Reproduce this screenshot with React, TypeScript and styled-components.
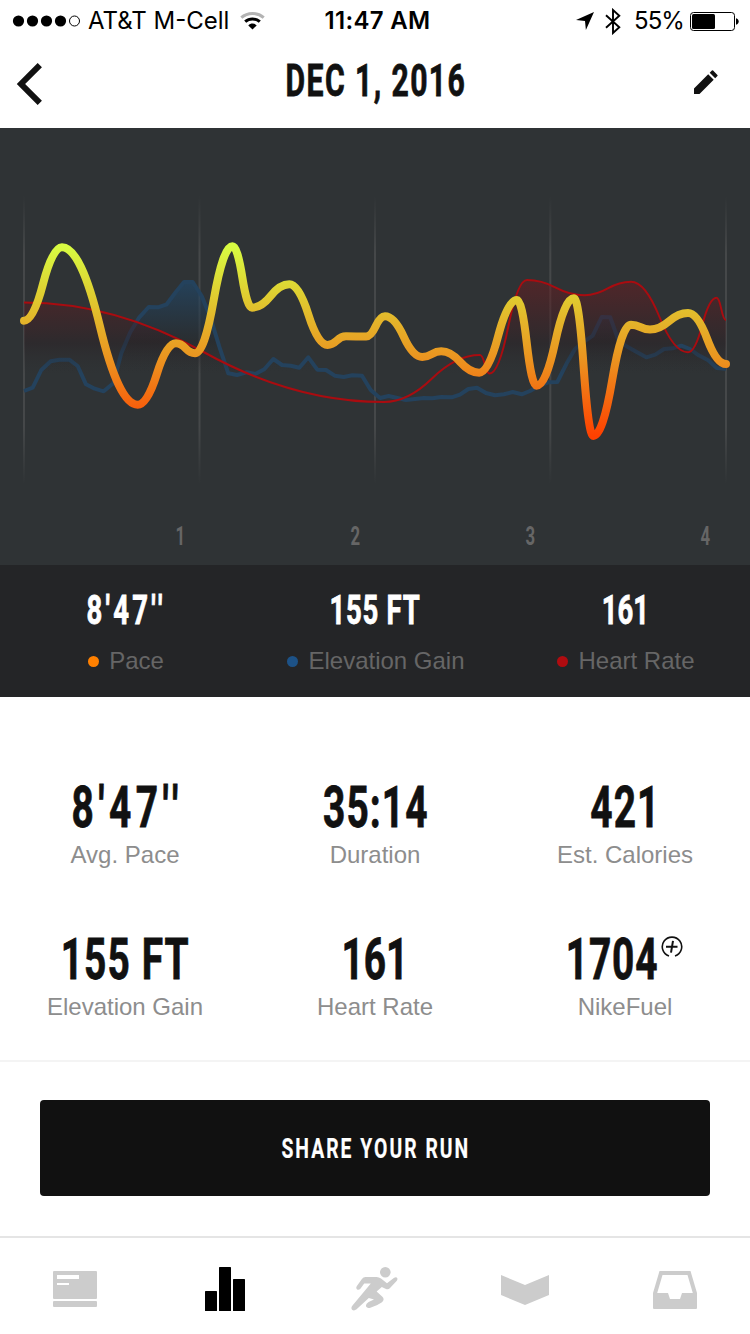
import React from "react";
import styled, { createGlobalStyle } from "styled-components";

const GlobalStyle = createGlobalStyle`
  * { box-sizing: border-box; }
  body { margin: 0; background: #fff; }
`;

const Screen = styled.div`
  width: 750px;
  height: 1334px;
  display: flex;
  flex-direction: column;
  overflow: hidden;
  background: #fff;
  color: #111;
  font-family: "Liberation Sans", Arial, sans-serif;
`;

/* Narrow display lettering: a fixed-width slot with its text squeezed into it. */
const Slot = styled.span<{ $width: number; $size: number }>`
  display: inline-flex;
  justify-content: center;
  width: ${(p) => p.$width}px;
  font-size: ${(p) => p.$size}px;
  line-height: 1;
`;
const Squeezed = styled.span<{ $scale: number; $tracking: number; $weight: number; $stroke: number }>`
  flex: none;
  white-space: pre;
  font-family: Roboto, sans-serif;
  font-weight: ${(p) => p.$weight};
  letter-spacing: ${(p) => p.$tracking}em;
  margin-right: ${(p) => -p.$tracking / 2}em;
  -webkit-text-stroke: ${(p) => p.$stroke}px currentColor;
  transform: scaleX(${(p) => p.$scale});
`;

type CondensedProps = {
  text: string;
  width: number;
  size: number;
  scale?: number;
  tracking?: number;
  weight?: number;
  stroke?: number;
};
function Condensed({ text, width, size, scale = 0.67, tracking = 0.028, weight = 700, stroke = 0.8 }: CondensedProps) {
  return (
    <Slot $width={width} $size={size}>
      <Squeezed $scale={scale} $tracking={tracking} $weight={weight} $stroke={stroke}>
        {text}
      </Squeezed>
    </Slot>
  );
}

const StatusBar = styled.div`
  height: 40px;
  flex: none;
  display: grid;
  grid-template-columns: 1fr 120px 1fr;
  align-items: center;
  padding: 1px 11px 0 12px;
  color: #000;
  font: 400 24px/40px Inter, sans-serif;
`;
const Carrier = styled.div`
  display: flex;
  align-items: center;
  white-space: nowrap;
`;
const CarrierName = styled.span`
  margin: 0 11px 0 7px;
`;
const Clock = styled.div`
  padding-left: 4px;
  text-align: center;
  font-weight: 600;
  letter-spacing: 0.3px;
  white-space: nowrap;
`;
const Indicators = styled.div`
  display: flex;
  align-items: center;
  justify-content: flex-end;
`;
const BluetoothSlot = styled.span`
  display: flex;
  margin: 0 13px 0 11px;
`;
const BatteryLevel = styled.span`
  margin-right: 6px;
  letter-spacing: -0.9px;
`;

const Header = styled.header`
  height: 88px;
  flex: none;
  display: grid;
  grid-template-columns: 60px 1fr 60px;
  align-items: center;
  padding: 0 16px;
`;
const Title = styled.h1`
  margin: -8px 0 0;
  display: flex;
  justify-content: center;
`;
const IconButton = styled.button<{ $end?: boolean }>`
  display: flex;
  justify-content: ${(p) => (p.$end ? "flex-end" : "flex-start")};
  padding: ${(p) => (p.$end ? "0 16px 4px 0" : "0")};
  border: 0;
  background: none;
  color: #111;
`;

const ChartPanel = styled.section`
  height: 437px;
  flex: none;
  display: flex;
  flex-direction: column;
  background: #2f3335;
`;
const MileAxis = styled.div`
  display: flex;
  padding: 7px 0 0 93px;
  color: #666;
`;
const Mile = styled.div`
  width: 175px;
  flex: none;
  display: flex;
  justify-content: center;
`;

const Summary = styled.section`
  height: 132px;
  flex: none;
  display: grid;
  grid-template-columns: repeat(3, 1fr);
  padding-top: 25px;
  background: #242527;
  color: #fff;
`;
const SummaryItem = styled.div`
  display: flex;
  flex-direction: column;
  align-items: center;
  gap: 16px;
`;
const Legend = styled.div<{ $color: string }>`
  display: flex;
  align-items: center;
  gap: 10px;
  margin-left: 2px;
  font-size: 24px;
  line-height: 27px;
  color: #666;
  &::before {
    content: "";
    width: 11px;
    height: 11px;
    margin-top: 2px;
    border-radius: 50%;
    background: ${(p) => p.$color};
  }
`;

const Stats = styled.section`
  height: 363px;
  flex: none;
  display: grid;
  grid-template-columns: repeat(3, 1fr);
  grid-auto-rows: 152px;
  padding-top: 81px;
`;
const Stat = styled.div`
  display: flex;
  flex-direction: column;
  align-items: center;
`;
const StatValue = styled.div`
  display: flex;
  gap: 4px;
  height: 63px;
`;
const FuelMark = styled.span`
  margin-top: 6px;
`;
const StatLabel = styled.div`
  font-size: 24px;
  line-height: 27px;
  color: #8d8d8d;
`;

const ShareArea = styled.div`
  height: 176px;
  flex: none;
  padding: 38px 40px 0;
  border-top: 2px solid #f4f4f4;
`;
const ShareButton = styled.button`
  display: flex;
  align-items: center;
  justify-content: center;
  width: 100%;
  height: 96px;
  padding: 2px 0 0;
  border: 0;
  border-radius: 4px;
  background: #111;
  color: #fff;
`;

const TabBar = styled.nav`
  flex: 1;
  display: grid;
  grid-template-columns: repeat(5, 1fr);
  align-items: center;
  padding-top: 6px;
  border-top: 2px solid #e5e5e5;
`;
const Tab = styled.a<{ $active?: boolean }>`
  display: flex;
  justify-content: center;
  color: ${(p) => (p.$active ? "#000" : "#ccc")};
`;

type Point = [number, number];

/* Each span is two quadratic halves that are level at the samples and meet midway. */
function smooth(pts: Point[]): string {
  let d = `M${pts[0][0]} ${pts[0][1]}`;
  for (let i = 1; i < pts.length; i++) {
    const [x0, y0] = pts[i - 1];
    const [x1, y1] = pts[i];
    const mx = (x0 + x1) / 2;
    const my = (y0 + y1) / 2;
    d += `Q${(x0 + mx) / 2} ${y0} ${mx} ${my}Q${(mx + x1) / 2} ${y1} ${x1} ${y1}`;
  }
  return d;
}

const pace: Point[] = [
  [24, 320.7], [62, 247.3], [137.7, 404.7], [176, 343.3], [195, 353.3], [232.5, 246.3], [252, 307.7],
  [289.3, 284.3], [327.5, 345], [346, 336.3], [366.2, 336.5], [385, 316.3], [422.3, 357], [441.2, 351.3],
  [479.2, 372.7], [517, 300], [536.5, 385.7], [574, 298.3], [593.3, 436], [631, 324.7], [650, 329.5],
  [688, 313], [726, 364],
];

const elevation: Point[] = [
  [24, 391], [32.7, 387.7], [41.3, 370], [50.7, 361.3], [59.3, 359.7], [69.3, 359.7], [77.7, 366], [86, 384.3],
  [94.7, 388.7], [103.7, 391.3], [113.3, 383.3], [121.3, 353.3], [130, 332.7], [139.3, 317.3], [148.7, 307],
  [158, 307.3], [166.7, 304.3], [175.3, 292.7], [184, 282], [192.7, 282], [201.7, 296], [210.7, 318.3],
  [219.3, 346.7], [228.3, 373.3], [237, 375], [246.7, 372.3], [255.3, 374], [264.3, 369.3], [273.3, 359],
  [282, 365], [290.7, 365.7], [299.3, 367.7], [308.3, 357.3], [317.3, 369.7], [326, 370], [334.7, 375.7],
  [343.7, 377], [352.3, 375.3], [362, 375.7], [370.7, 390], [380, 398], [388.7, 396], [397.3, 398], [406, 400],
  [415, 399], [424, 398], [432.3, 398.3], [441.3, 397], [451.7, 397.3], [460, 394.7], [468.3, 389], [477, 387.7],
  [486, 393], [495, 395.3], [504, 394.3], [512.7, 392], [521.7, 394.3], [530, 391], [538.3, 386], [548.3, 382.3],
  [557.3, 382], [566.7, 363.3], [575, 349], [584, 341.7], [592.7, 335.7], [601.7, 317], [610.3, 317.3],
  [618.3, 340], [626, 346], [636.7, 352], [646.3, 357.3], [655.3, 354.7], [664, 349], [672.7, 348.3],
  [681.3, 345.7], [690, 349], [698.7, 355.3], [708.3, 360.3], [716.7, 368], [726, 368.7],
];

const heart: Point[] = [
  [24, 302.5], [384, 402], [480, 355], [489.5, 373.5], [527, 280], [584.5, 295.2], [631, 281.7],
  [688, 352.3], [716.5, 297.7], [726, 320],
];

const elevationLine = "M" + elevation.map((p) => p.join(" ")).join("L");
const heartLine = smooth(heart);
const gridXs = [24, 199.5, 375, 550.3, 726];

function RunChart() {
  return (
    <svg width="750" height="389" viewBox="0 128 750 389" fill="none">
      <defs>
        <linearGradient id="pace" gradientUnits="userSpaceOnUse" x1="0" y1="247" x2="0" y2="436">
          <stop offset="0" stopColor="#d8fb42" />
          <stop offset="0.28" stopColor="#e0c92f" />
          <stop offset="0.4" stopColor="#e4b32a" />
          <stop offset="0.62" stopColor="#ec8f1e" />
          <stop offset="1" stopColor="#ff4000" />
        </linearGradient>
        <linearGradient id="elevation" gradientUnits="userSpaceOnUse" x1="0" y1="282" x2="0" y2="374">
          <stop offset="0" stopColor="#1c4d78" stopOpacity="0.55" />
          <stop offset="0.65" stopColor="#25282b" stopOpacity="0.5" />
          <stop offset="1" stopColor="#2f3335" stopOpacity="0" />
        </linearGradient>
        <linearGradient id="heart" gradientUnits="userSpaceOnUse" x1="0" y1="278" x2="0" y2="374">
          <stop offset="0" stopColor="#7a171b" stopOpacity="0.46" />
          <stop offset="0.68" stopColor="#2b2024" stopOpacity="0.46" />
          <stop offset="1" stopColor="#2b2a2c" stopOpacity="0" />
        </linearGradient>
        <linearGradient id="grid" gradientUnits="userSpaceOnUse" x1="0" y1="196" x2="0" y2="484">
          <stop offset="0" stopColor="#515354" stopOpacity="0" />
          <stop offset="0.2" stopColor="#515354" stopOpacity="0.65" />
          <stop offset="0.8" stopColor="#515354" stopOpacity="0.65" />
          <stop offset="1" stopColor="#515354" stopOpacity="0" />
        </linearGradient>
      </defs>
      {gridXs.map((x) => (
        <rect key={x} x={x - 1} y="196" width="2" height="288" fill="url(#grid)" />
      ))}
      <path d={`${elevationLine}V374H24Z`} fill="url(#elevation)" />
      <path d={elevationLine} stroke="#24425d" strokeWidth="4" strokeLinejoin="round" />
      <path d={`${heartLine}V374H24Z`} fill="url(#heart)" />
      <path d={heartLine} stroke="#a90c10" strokeWidth="2" />
      <path d={smooth(pace)} stroke="url(#pace)" strokeWidth="8" strokeLinecap="round" strokeLinejoin="round" />
    </svg>
  );
}

function SignalDots() {
  return (
    <svg width="69" height="12" viewBox="0 0 69 12">
      {[6.5, 20.5, 34.5, 48.5].map((x) => (
        <circle key={x} cx={x} cy="6" r="5.6" />
      ))}
      <circle cx="62.5" cy="6" r="5" fill="none" stroke="#000" />
    </svg>
  );
}

function WifiIcon() {
  return (
    <svg width="25" height="18" viewBox="0 0 25 18" fill="none" strokeWidth="3">
      <path d="M1.3 5.7C7.5.1 17.5.1 23.7 5.7" stroke="#b3b3b3" />
      <path d="M5.2 9.7C9.3 6 15.7 6 19.8 9.7" stroke="#000" />
      <path d="M8.3 13.4C10.6 10.9 14.4 10.9 16.7 13.4L12.5 17.6Z" fill="#000" stroke="none" />
    </svg>
  );
}

function LocationIcon() {
  return (
    <svg width="18" height="18" viewBox="0 0 18 18">
      <path d="M18 0L9.9 18L9 9L0 8Z" />
    </svg>
  );
}

function BluetoothIcon() {
  return (
    <svg width="16" height="27" viewBox="0 0 16 27" fill="none" stroke="#000" strokeWidth="1.9">
      <path d="M1 7.2L14.3 19.3L8 25V2L14.3 7.7L1 19.8" />
    </svg>
  );
}

function BatteryIcon() {
  return (
    <svg width="49" height="19" viewBox="0 0 49 19">
      <rect x="0.5" y="0.5" width="44" height="18" rx="3" fill="none" stroke="#000" />
      <rect x="2" y="2" width="23" height="15" rx="1.5" />
      <path d="M46 6.3C49.6 7 49.6 12 46 12.7Z" />
    </svg>
  );
}

function BackIcon() {
  return (
    <svg width="27" height="42" viewBox="0 0 27 42" fill="none" stroke="currentColor" strokeWidth="6">
      <path d="M23.8 2.1L5 21L23.8 39.9" />
    </svg>
  );
}

function PencilIcon() {
  return (
    <svg width="24" height="24" viewBox="0 0 24 24" fill="currentColor">
      <path d="M0 18.5L14.2 4.3L19.7 9.8L5.5 24H0ZM15.7 2.8L17.9.6Q18.5 0 19.1.6L23.4 4.9Q24 5.5 23.4 6.1L21.2 8.3Z" />
    </svg>
  );
}

function FuelIcon() {
  return (
    <svg width="22" height="22" viewBox="0 0 22 22" fill="none" stroke="#111" strokeWidth="1.6">
      <path d="M8 20A9.7 9.7 0 1 1 14 20" />
      <path d="M5 10.8H16.5M12 4.8L10 16.6" strokeWidth="2" />
    </svg>
  );
}

function FeedIcon() {
  return (
    <svg width="44" height="36" viewBox="0 0 44 36" fill="currentColor">
      <rect width="44" height="28" rx="1" />
      <rect y="30" width="44" height="6" rx="1" />
      <path d="M4 4H26V8H4ZM4 12H16V14H4Z" fill="#fff" />
    </svg>
  );
}

function ActivityIcon() {
  return (
    <svg width="40" height="44" viewBox="0 0 40 44" fill="currentColor">
      <rect y="24" width="12" height="20" rx="0.6" />
      <rect x="14" width="12" height="44" rx="0.6" />
      <rect x="28" y="12" width="12" height="32" rx="0.6" />
    </svg>
  );
}

function RunnerIcon() {
  return (
    <svg width="48" height="46" viewBox="0 0 48 46" fill="currentColor">
      <circle cx="34.3" cy="6.2" r="5.3" />
      <path d="M14.5 11H25.5Q28 11 30 12.6L36 17.2L42.8 12Q45.3 10.6 46.2 12Q46.9 13.2 45.6 14.9L38.8 22.2Q37.4 23.8 35 23.1L30.8 21.1L25.6 25.5L31.4 30.8Q34 33.5 31 36.3Q27 39.3 20 41.4Q16.2 42.8 15.1 40.6Q14.3 38 17.6 36.1L23 33.6L17.8 31.9L5.3 43.6Q3 45.2 1 43.7Q-.4 41.8 1.5 39.4L19.8 17.6H13.2L9.4 22.8Q7.4 24.6 5.9 23.2Q4.6 22 5.9 19.9L10.9 13Q12.4 11 14.5 11Z" />
    </svg>
  );
}

function ClubIcon() {
  return (
    <svg width="48" height="32" viewBox="0 -2 48 32" fill="currentColor">
      <path d="M0 0L24 10L48 0V20L24 30L0 20Z" />
    </svg>
  );
}

function InboxIcon() {
  return (
    <svg width="44" height="40" viewBox="0 -2 44 40" fill="currentColor" fillRule="evenodd">
      <path d="M6.5 0H37.5L44 22V37Q44 38 43 38H1Q0 38 0 37V22ZM9.5 4L4.2 22H15L17 28H27L29 22H39.8L34.5 4Z" />
    </svg>
  );
}

export default function App() {
  return (
    <Screen>
      <GlobalStyle />
      <StatusBar>
        <Carrier>
          <SignalDots />
          <CarrierName>AT&amp;T M-Cell</CarrierName>
          <WifiIcon />
        </Carrier>
        <Clock>11:47 AM</Clock>
        <Indicators>
          <LocationIcon />
          <BluetoothSlot>
            <BluetoothIcon />
          </BluetoothSlot>
          <BatteryLevel>55%</BatteryLevel>
          <BatteryIcon />
        </Indicators>
      </StatusBar>
      <Header>
        <IconButton aria-label="Back">
          <BackIcon />
        </IconButton>
        <Title>
          <Condensed text="DEC 1, 2016" width={180} size={45} tracking={0.047} />
        </Title>
        <IconButton aria-label="Edit" $end>
          <PencilIcon />
        </IconButton>
      </Header>

      <ChartPanel>
        <RunChart />
        <MileAxis>
          {["1", "2", "3", "4"].map((mile) => (
            <Mile key={mile}>
              <Condensed text={mile} width={10} size={25} stroke={0} />
            </Mile>
          ))}
        </MileAxis>
      </ChartPanel>

      <Summary>
        <SummaryItem>
          <Condensed text="8'47''" width={78} size={41} tracking={0.118} />
          <Legend $color="#ff8000">Pace</Legend>
        </SummaryItem>
        <SummaryItem>
          <Condensed text="155 FT" width={90} size={41} />
          <Legend $color="#1d5287">Elevation Gain</Legend>
        </SummaryItem>
        <SummaryItem>
          <Condensed text="161" width={44} size={41} tracking={0} />
          <Legend $color="#b00c10">Heart Rate</Legend>
        </SummaryItem>
      </Summary>

      <Stats>
        <Stat>
          <StatValue>
            <Condensed text="8'47''" width={107} size={58} tracking={0.115} />
          </StatValue>
          <StatLabel>Avg. Pace</StatLabel>
        </Stat>
        <Stat>
          <StatValue>
            <Condensed text="35:14" width={104} size={58} />
          </StatValue>
          <StatLabel>Duration</StatLabel>
        </Stat>
        <Stat>
          <StatValue>
            <Condensed text="421" width={68} size={58} />
          </StatValue>
          <StatLabel>Est. Calories</StatLabel>
        </Stat>
        <Stat>
          <StatValue>
            <Condensed text="155 FT" width={126} size={58} />
          </StatValue>
          <StatLabel>Elevation Gain</StatLabel>
        </Stat>
        <Stat>
          <StatValue>
            <Condensed text="161" width={60} size={58} tracking={0} />
          </StatValue>
          <StatLabel>Heart Rate</StatLabel>
        </Stat>
        <Stat>
          <StatValue>
            <Condensed text="1704" width={90} size={58} tracking={0.022} />
            <FuelMark>
              <FuelIcon />
            </FuelMark>
          </StatValue>
          <StatLabel>NikeFuel</StatLabel>
        </Stat>
      </Stats>

      <ShareArea>
        <ShareButton>
          <Condensed text="SHARE YOUR RUN" width={187} size={28} scale={0.69} tracking={0.105} stroke={0.2} />
        </ShareButton>
      </ShareArea>

      <TabBar>
        <Tab><FeedIcon /></Tab>
        <Tab $active><ActivityIcon /></Tab>
        <Tab><RunnerIcon /></Tab>
        <Tab><ClubIcon /></Tab>
        <Tab><InboxIcon /></Tab>
      </TabBar>
    </Screen>
  );
}
